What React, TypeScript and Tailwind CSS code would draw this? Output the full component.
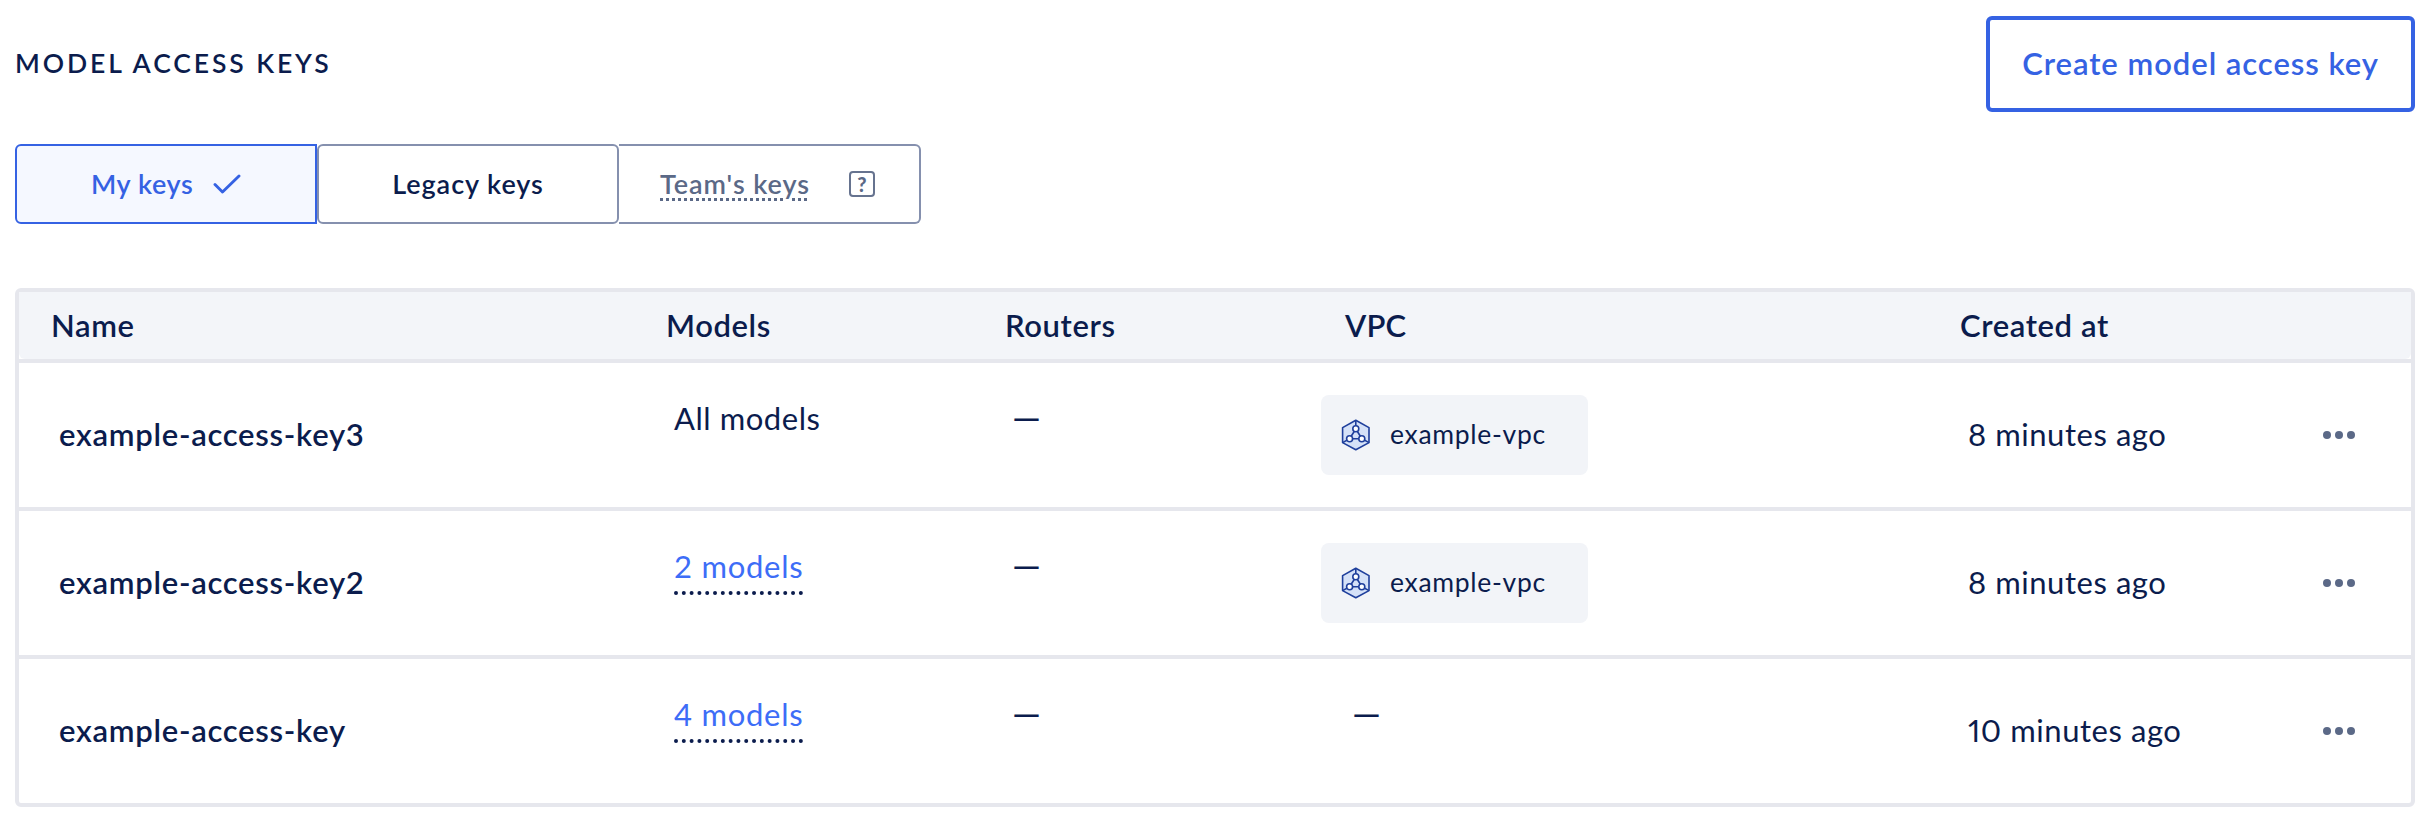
import React from 'react';

type AccessKey = {
  name: string;
  models: string;
  linked: boolean;
  vpc: string | null;
  createdAt: string;
};

const accessKeys: AccessKey[] = [
  { name: 'example-access-key3', models: 'All models', linked: false, vpc: 'example-vpc', createdAt: '8 minutes ago' },
  { name: 'example-access-key2', models: '2 models', linked: true, vpc: 'example-vpc', createdAt: '8 minutes ago' },
  { name: 'example-access-key', models: '4 models', linked: true, vpc: null, createdAt: '10 minutes ago' },
];

const CheckIcon: React.FC = () => (
  <svg width="28" height="20" viewBox="0 0 28 20" fill="none" stroke="currentColor" strokeWidth="2.9" strokeLinecap="round" strokeLinejoin="round">
    <path d="M2 10.5 9.5 18 26 2" />
  </svg>
);

const VpcIcon: React.FC = () => (
  <svg width="30" height="32" viewBox="0 0 30 32" fill="none" stroke="#1f3f9c" strokeWidth="1.6" strokeLinejoin="round">
    <path d="M14.8 1.2 28 8.6v15L14.8 30.8 1.6 23.6v-15z" fill="#d5e1f8" />
    <path d="M14.8 1.2V10M1.6 23.6 8.6 19.8M28 23.6 21 19.8M14.8 10 8.6 19.8H21z" />
    <circle cx="14.8" cy="9.8" r="3" fill="#fff" />
    <circle cx="8.6" cy="19.8" r="3" fill="#fff" />
    <circle cx="20.8" cy="19.8" r="3" fill="#fff" />
  </svg>
);

const DotsIcon: React.FC = () => (
  <svg width="32" height="8" viewBox="0 0 32 8" fill="#5b6987">
    <circle cx="4" cy="4" r="4" />
    <circle cx="16" cy="4" r="4" />
    <circle cx="28" cy="4" r="4" />
  </svg>
);

const Header: React.FC = () => (
  <header className="flex items-center justify-between">
    <h2 className="pb-0.5 text-[26.5px] font-semibold leading-8 tracking-[2.9px]">MODEL ACCESS KEYS</h2>
    <button className="flex h-24 w-[429px] items-center justify-center rounded-md border-4 border-[#3562e3] pb-0.5 text-[31px] font-semibold tracking-[0.95px] text-[#3562e3]">
      Create model access key
    </button>
  </header>
);

const Tabs: React.FC = () => (
  <div className="mt-8 flex text-[27px] font-semibold tracking-[0.95px]">
    <button className="flex h-20 w-[302px] items-center rounded-l-md border-2 border-[#3562e3] bg-[#f5f8ff] pl-[74px] text-[#3562e3]">
      <span className="w-[122px] text-left tracking-[0.6px]">My keys</span>
      <CheckIcon />
    </button>
    <button className="flex h-20 w-[302px] items-center justify-center rounded-md border-2 border-[#8590ae]">
      Legacy keys
    </button>
    <button className="flex h-20 w-[302px] items-center rounded-r-md border-2 border-l-0 border-[#8590ae] pl-[41px] text-[#5b6987]">
      <span className="w-[189px] text-left">
        <span className="underline decoration-dotted decoration-[3px] underline-offset-[4px]">Team's keys</span>
      </span>
      <span className="flex size-[26px] items-center justify-center rounded-[4px] border-2 border-[#66738f] text-[20px] font-black leading-none tracking-normal">
        ?
      </span>
    </button>
  </div>
);

const VpcChip: React.FC<{ name: string }> = ({ name }) => (
  <span className="-ml-8 flex h-20 w-[267px] items-center rounded-lg bg-[#f2f4f8] pl-[20px] text-[26.5px]">
    <VpcIcon />
    <span className="ml-[19px] pb-[3px] tracking-[0.7px]">{name}</span>
  </span>
);

const Dash: React.FC = () => <span className="-ml-px inline-block h-12 text-[36.5px]">—</span>;

const KeysTable: React.FC = () => (
  <section className="mt-16 rounded-md border-4 border-[#e6e7ed] text-[31px]">
    <div className="flex h-[67px] items-center rounded-b-md bg-[#f3f5f9] pl-8 font-semibold tracking-[0.6px]">
      <div className="w-[615px]">Name</div>
      <div className="w-[339px]">Models</div>
      <div className="w-[340px]">Routers</div>
      <div className="w-[615px] tracking-[0.2px]">VPC</div>
      <div>Created at</div>
    </div>
    {accessKeys.map((key) => (
      <div key={key.name} className="flex h-[148px] items-center border-t-4 border-[#e6e7ed] pl-10 leading-[48px]">
        <div className="w-[615px] pb-[3px] font-semibold tracking-[0.72px]">{key.name}</div>
        <div className="w-[339px] self-start pt-[31px] tracking-[0.55px]">
          {key.linked ? (
            <a href="#models" className="inline-block h-[53px] border-b-4 border-dotted border-[#0b1c4d] tracking-[0.75px] text-[#3d6df7]">
              {key.models}
            </a>
          ) : (
            key.models
          )}
        </div>
        <div className="w-[340px] self-start pt-[30px]">
          <Dash />
        </div>
        <div className={key.vpc ? 'w-[615px]' : 'w-[615px] self-start pt-[30px]'}>
          {key.vpc ? <VpcChip name={key.vpc} /> : <Dash />}
        </div>
        <div className="w-[355px] pb-[3px] proportional-nums tracking-[0.55px]">{key.createdAt}</div>
        <button aria-label="Key actions">
          <DotsIcon />
        </button>
      </div>
    ))}
  </section>
);

export default function App() {
  return (
    <main className="min-h-[824px] bg-white py-4 pl-[15px] pr-[13px] font-['Lato',sans-serif] text-[#0b1c4d]">
      <Header />
      <Tabs />
      <KeysTable />
    </main>
  );
}
